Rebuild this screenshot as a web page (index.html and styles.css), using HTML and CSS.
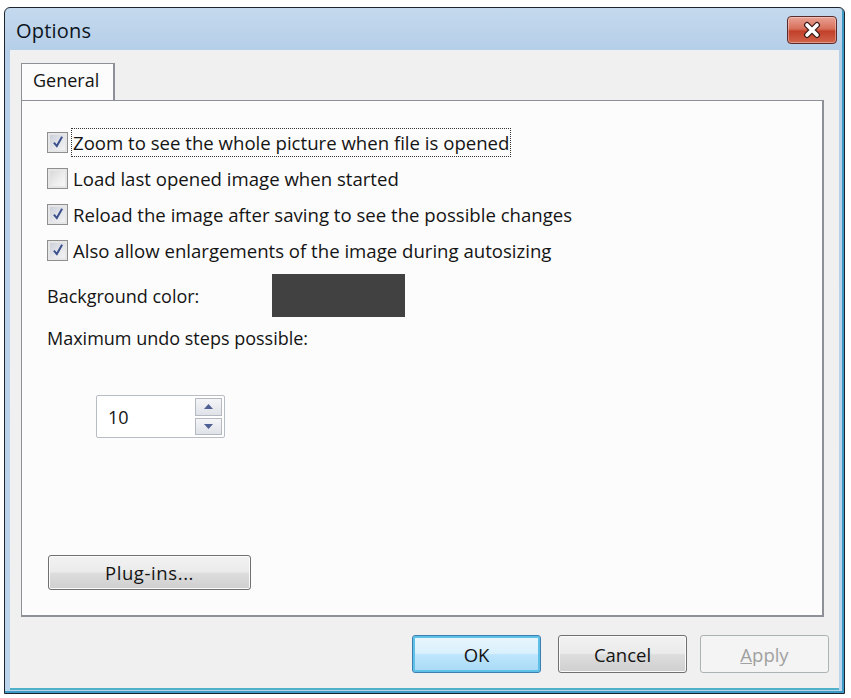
FILE: index.html
```html
<!DOCTYPE html>
<html>
<head>
<meta charset="utf-8">
<link rel="stylesheet" href="styles.css">
</head>
<body>
<div class="window">
  <div class="titlebar">
    <span class="title">Options</span>
    <div class="close">
      <svg width="26" height="18" viewBox="0 0 26 18">
        <path d="M8 4 L18 14 M18 4 L8 14" stroke="#3a1a1a" stroke-width="6" stroke-linecap="round" fill="none"/>
        <path d="M8 4 L18 14 M18 4 L8 14" stroke="#ffffff" stroke-width="3.6" stroke-linecap="round" fill="none"/>
      </svg>
    </div>
  </div>
  <div class="client">
    <div class="tabs">
      <div class="tab">General</div>
    </div>
    <div class="panel">
      <div class="row">
        <span class="cb checked"><svg viewBox="0 0 12 12" width="14" height="14"><path d="M2.5 6.5 L5 9.5 L9.5 1.5" stroke="#3b4f8c" stroke-width="1.7" fill="none"/></svg></span>
        <span class="label focus">Zoom to see the whole picture when file is opened</span>
      </div>
      <div class="row">
        <span class="cb"></span>
        <span class="label">Load last opened image when started</span>
      </div>
      <div class="row">
        <span class="cb checked"><svg viewBox="0 0 12 12" width="14" height="14"><path d="M2.5 6.5 L5 9.5 L9.5 1.5" stroke="#3b4f8c" stroke-width="1.7" fill="none"/></svg></span>
        <span class="label">Reload the image after saving to see the possible changes</span>
      </div>
      <div class="row">
        <span class="cb checked"><svg viewBox="0 0 12 12" width="14" height="14"><path d="M2.5 6.5 L5 9.5 L9.5 1.5" stroke="#3b4f8c" stroke-width="1.7" fill="none"/></svg></span>
        <span class="label">Also allow enlargements of the image during autosizing</span>
      </div>
      <div class="colorrow">
        <span class="colorlabel">Background color:</span>
        <span class="swatch"></span>
      </div>
      <div class="undolabel">Maximum undo steps possible:</div>
      <div class="spin">
        <span class="spinval">10</span>
        <div class="spinbtns">
          <span class="sbtn"><svg width="9" height="5" viewBox="0 0 9 5"><path d="M0 5 L4.5 0 L9 5 Z" fill="#4e5f92"/></svg></span>
          <span class="sbtn"><svg width="9" height="5" viewBox="0 0 9 5"><path d="M0 0 L4.5 5 L9 0 Z" fill="#4e5f92"/></svg></span>
        </div>
      </div>
      <div class="plugrow">
        <button class="btn plug">Plug-ins...</button>
      </div>
    </div>
    <div class="buttons">
      <button class="btn ok">OK</button>
      <button class="btn cancel">Cancel</button>
      <button class="btn apply"><u>A</u>pply</button>
    </div>
  </div>
</div>
</body>
</html>
```

FILE: styles.css
```css
html, body {
  margin: 0;
  padding: 0;
  background: #ffffff;
}
body {
  padding: 7px 6px 4px 4px;
  font-family: "Open Sans", "Liberation Sans", sans-serif;
  color: #141414;
}
.window {
  width: 839px;
  height: 685px;
  border: 1px solid #1c2530;
  border-radius: 6px 6px 0 0;
  background: linear-gradient(to bottom, #c4d9ee 0px, #b6cfe8 40px, #bcd4ec 100%);
  display: flex;
  flex-direction: column;
  box-shadow: inset -2px -2px 0 #3d9ac4;
}
.titlebar {
  height: 42px;
  display: flex;
  align-items: center;
  justify-content: space-between;
  padding: 0 7px 0 11px;
}
.title {
  font-size: 20px;
  color: #0c1420;
  padding-top: 2px;
  letter-spacing: 0.2px;
}
.close {
  width: 48px;
  height: 26px;
  border: 1px solid #5b2a2a;
  border-radius: 4px;
  background: linear-gradient(to bottom, #e9a294 0%, #d86f5b 45%, #c2402a 55%, #d2644c 100%);
  display: flex;
  align-items: center;
  justify-content: center;
  margin-top: 1px;
  box-shadow: inset 0 0 0 1px rgba(255,255,255,0.35);
}
.client {
  flex: 1;
  margin: 0 5px 3px 5px;
  background: #f0f0f0;
  display: flex;
  flex-direction: column;
  padding: 13px 12px 0 11px;
  border-bottom: 2px solid #4fb1c9;
}
.tabs {
  display: flex;
  height: 37px;
}
.tab {
  width: 94px;
  height: 37px;
  box-sizing: border-box;
  border: 1px solid #8d9096;
  border-bottom: none;
  border-right: 2px solid #8d9096;
  background: #fcfcfc;
  font-size: 18px;
  padding: 4px 0 0 11px;
  position: relative;
  z-index: 1;
  margin-bottom: -1px;
}
.panel {
  width: 803px;
  height: 517px;
  box-sizing: border-box;
  border: 1px solid #8d9096;
  border-right-width: 2px;
  border-bottom-width: 2px;
  background: #fcfcfc;
  padding: 23px 0 0 25px;
  display: flex;
  flex-direction: column;
  align-items: flex-start;
}
.row {
  height: 36px;
  display: flex;
  align-items: center;
}
.cb {
  width: 19px;
  height: 19px;
  border: 1px solid #8f8f8f;
  background: linear-gradient(135deg, #d4d4d4 0%, #efefef 60%, #fafafa 100%);
  box-shadow: inset 0 0 0 2px #e6e6e6;
  display: flex;
  align-items: center;
  justify-content: center;
  margin-right: 3px;
}
.cb.checked {
  background: linear-gradient(135deg, #c6cad4 0%, #e6e8ec 60%, #f6f6f6 100%);
}
.label {
  font-size: 18.6px;
  line-height: 25px;
  padding: 1px 1px;
  border: 1px dotted transparent;
}
.label.focus {
  border: 1px dotted #333;
}
.colorrow {
  display: flex;
  align-items: center;
  margin-top: 6px;
  height: 43px;
}
.colorlabel {
  width: 225px;
  font-size: 18px;
}
.swatch {
  width: 133px;
  height: 43px;
  background: #414141;
}
.undolabel {
  font-size: 18px;
  margin-top: 10px;
  height: 22px;
  line-height: 22px;
}
.spin {
  margin-top: 46px;
  margin-left: 49px;
  width: 129px;
  height: 43px;
  box-sizing: border-box;
  border: 1px solid #b8bcc4;
  border-radius: 2px;
  background: #ffffff;
  display: flex;
  align-items: center;
  justify-content: space-between;
  padding: 2px 2px 2px 11px;
}
.spinval {
  font-size: 18px;
}
.spinbtns {
  display: flex;
  flex-direction: column;
  gap: 2px;
  width: 27px;
  height: 37px;
}
.sbtn {
  flex: 1;
  border: 1px solid #b5b9c2;
  background: linear-gradient(to bottom, #f4f5f7, #dfe2e8);
  display: flex;
  align-items: center;
  justify-content: center;
}
.plugrow {
  margin-top: auto;
  margin-bottom: 25px;
  margin-left: 1px;
}
.btn {
  font-family: "Open Sans", "Liberation Sans", sans-serif;
  font-size: 18.5px;
  color: #141414;
  height: 38px;
  width: 129px;
  border-radius: 3px;
  border: 1px solid #707070;
  background: linear-gradient(to bottom, #f2f2f2 0%, #ebebeb 48%, #dddddd 52%, #cfcfcf 100%);
  box-shadow: inset 0 0 0 1px #fbfbfb;
  padding: 0;
}
.plug {
  width: 203px;
  height: 35px;
  letter-spacing: 0.6px;
}
.buttons {
  display: flex;
  justify-content: flex-end;
  margin-top: 18px;
}
.ok {
  margin-right: 17px;
  border: 1px solid #3c7fb1;
  background: linear-gradient(to bottom, #eaf6fd 0%, #d9f0fc 48%, #bee6fd 52%, #a7d9f5 100%);
  box-shadow: inset 0 0 0 2px #5fc0e8;
}
.cancel {
  margin-right: 13px;
}
.apply {
  border: 1px solid #adb2b5;
  background: #f4f4f4;
  color: #a0a0a0;
  box-shadow: none;
  margin-right: -2px;
}
```
